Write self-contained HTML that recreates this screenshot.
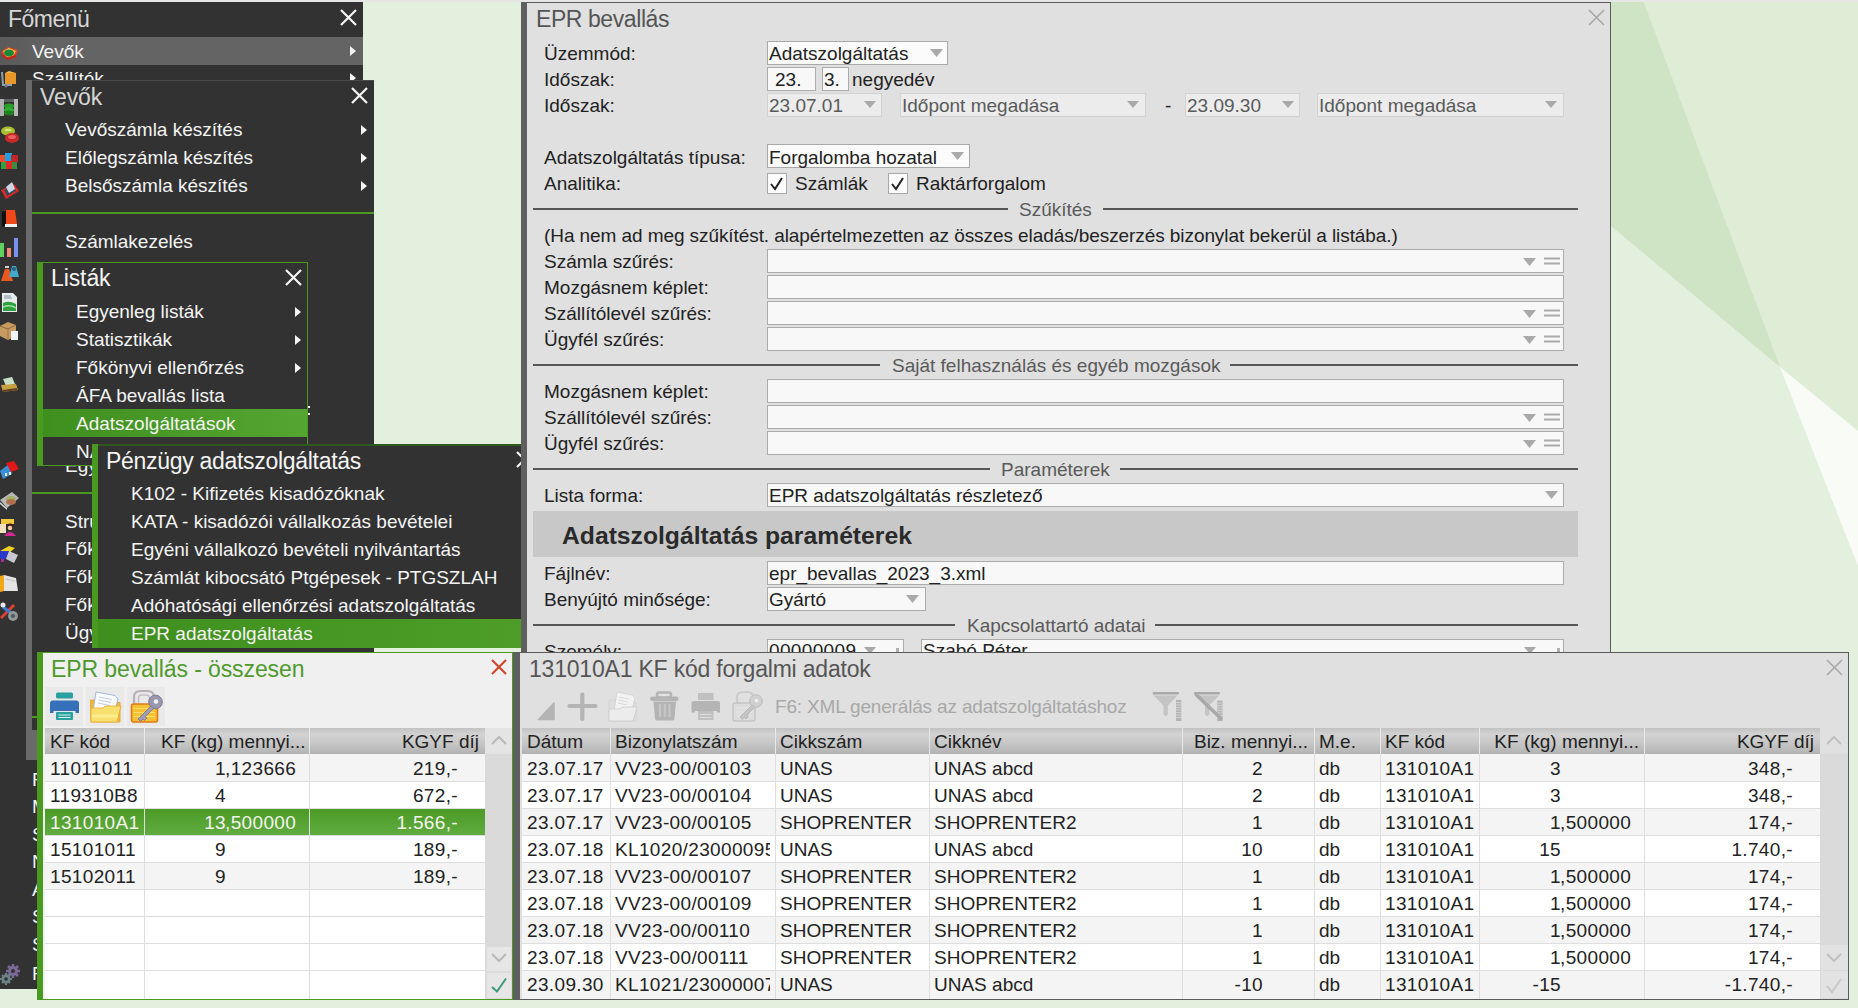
<!DOCTYPE html><html><head><meta charset="utf-8"><style>
html,body{margin:0;padding:0;width:1858px;height:1008px;overflow:hidden;position:relative;background:#e3efdc;}
.r{position:absolute;}
.t{position:absolute;font-family:"Liberation Sans",sans-serif;font-size:19px;line-height:19px;white-space:pre;color:#222;}
</style></head><body>
<svg class="r" style="left:0;top:0" width="1858" height="1008">
<rect width="1858" height="1008" fill="#e4f0de"/>
<polygon points="1643,0 1858,0 1858,431 1780,367" fill="#e0edd6"/>
<polygon points="1611,0 1643,0 1780,367 1611,226" fill="#cee4c4"/>
<polygon points="1780,367 1858,431 1858,566" fill="#f8fbf6"/>
</svg>
<div class="r" style="left:0px;top:0px;width:1858px;height:2px;background:#e6e6e6"></div>
<div class="r" style="left:0px;top:2px;width:363px;height:987px;background:#323232"></div>
<div class="t " style="left:8px;top:8px;font-size:23px;line-height:23px;color:#d6d6d6;letter-spacing:-0.5px;">Főmenü</div>
<svg class="r" style="left:338.5px;top:7.5px" width="19" height="19"><path d="M2 2L17 17M17 2L2 17" stroke="#f4f4f4" stroke-width="2.2"/></svg>
<div class="r" style="left:0px;top:37px;width:363px;height:28px;background:linear-gradient(90deg,#5a5a5a,#646464 15%,#646464)"></div>
<div class="t " style="left:32px;top:42px;color:#f4f4f4;">Vevők</div>
<svg class="r" style="left:350px;top:46px" width="7" height="11"><path d="M0 0L6 5L0 10Z" fill="#f4f4f4"/></svg>
<div class="t " style="left:32px;top:69px;color:#f4f4f4;">Szállítók</div>
<svg class="r" style="left:350px;top:73px" width="7" height="11"><path d="M0 0L6 5L0 10Z" fill="#f4f4f4"/></svg>
<div class="t " style="left:32px;top:770px;color:#f4f4f4;">F</div>
<div class="t " style="left:32px;top:797px;color:#f4f4f4;">M</div>
<div class="t " style="left:32px;top:825px;color:#f4f4f4;">S</div>
<div class="t " style="left:32px;top:852px;color:#f4f4f4;">N</div>
<div class="t " style="left:32px;top:880px;color:#f4f4f4;">A</div>
<div class="t " style="left:32px;top:907px;color:#f4f4f4;">S</div>
<div class="t " style="left:32px;top:935px;color:#f4f4f4;">S</div>
<div class="t " style="left:32px;top:964px;color:#f4f4f4;">F</div>
<svg class="r" style="left:0px;top:43px" width="22" height="22"><path d="M1 9L8 4L18 7L15 15L6 16Z" fill="#e8402a"/><path d="M3 8L9 5L16 8L13 13L6 14Z" fill="#f4c040"/><ellipse cx="9" cy="10" rx="5" ry="3.5" fill="#1a8a3a"/><path d="M2 12L8 16L16 13" stroke="#c02020" stroke-width="2" fill="none"/></svg>
<svg class="r" style="left:0px;top:69px" width="22" height="22"><path d="M2 3L3 16H12" stroke="#8aa0b0" stroke-width="2" fill="none"/><rect x="5" y="4" width="11" height="11" fill="#e89828"/><path d="M5 4L9 2L16 4" fill="#f4b848"/><circle cx="6" cy="17" r="1.5" fill="#707880"/></svg>
<svg class="r" style="left:0px;top:98px" width="22" height="22"><rect x="0" y="1" width="4" height="17" fill="#b0b0b0"/><rect x="14" y="1" width="4" height="17" fill="#b8b8b8"/><rect x="4" y="1" width="10" height="3" fill="#606060"/><ellipse cx="9" cy="8" rx="5" ry="2.5" fill="#28a028"/><ellipse cx="9" cy="12" rx="5" ry="2.5" fill="#30b030"/><ellipse cx="9" cy="15" rx="5" ry="2.5" fill="#208020"/></svg>
<svg class="r" style="left:0px;top:125px" width="22" height="22"><ellipse cx="8" cy="6" rx="7" ry="4.5" fill="#a8c030"/><path d="M5 5H11" stroke="#e8f0a0" stroke-width="1.5"/><ellipse cx="12" cy="13" rx="7" ry="5" fill="#c82828"/><ellipse cx="12" cy="12" rx="4" ry="2" fill="#e86060"/></svg>
<svg class="r" style="left:0px;top:152px" width="22" height="22"><rect x="0" y="3" width="6" height="7" fill="#e85030"/><rect x="5" y="1" width="7" height="8" fill="#20a0e0"/><rect x="11" y="3" width="7" height="7" fill="#c02828"/><rect x="1" y="10" width="6" height="7" fill="#30a040"/><rect x="6" y="9" width="7" height="8" fill="#e02828"/><rect x="12" y="10" width="5" height="7" fill="#3a8a40"/></svg>
<svg class="r" style="left:0px;top:181px" width="22" height="22"><path d="M1 9L14 3L19 10L6 18Z" fill="#e02828"/><path d="M4 9L13 5L16 10L7 15Z" fill="#3a4a5a"/><path d="M6 6L12 1L15 8L9 12Z" fill="#c8d8e8"/></svg>
<svg class="r" style="left:0px;top:209px" width="22" height="22"><path d="M4 1H15L17 15H6Z" fill="#f04818"/><path d="M2 3L6 1V16L2 18Z" fill="#101010"/><path d="M5 15H17V18H5Z" fill="#f0f0f0"/></svg>
<svg class="r" style="left:0px;top:238px" width="22" height="22"><rect x="0" y="5" width="4" height="14" fill="#60d060"/><rect x="7" y="10" width="4" height="9" fill="#f08878"/><rect x="14" y="0" width="4" height="19" fill="#7890f0"/></svg>
<svg class="r" style="left:0px;top:265px" width="22" height="22"><path d="M5 4H9L13 16H1Z" fill="#e85a20"/><path d="M5 2H9" stroke="#d0d0d0" stroke-width="2"/><path d="M12 1H16L19 12H9Z" fill="#40a8c8"/><circle cx="14" cy="4" r="2" fill="#2a5a80"/></svg>
<svg class="r" style="left:0px;top:292px" width="22" height="22"><path d="M2 1H13L17 5V20H2Z" fill="#e8ecec"/><path d="M3 11Q9 8 16 12V19H3Z" fill="#30a040"/><path d="M3 15Q10 12 16 16" stroke="#a0e0a0" stroke-width="1.5" fill="none"/><path d="M4 4H11M4 6H12" stroke="#8090a0" stroke-width="1"/></svg>
<svg class="r" style="left:0px;top:321px" width="22" height="22"><path d="M0 5L8 1L16 4V15L8 19L0 15Z" fill="#c89a60"/><path d="M0 5L8 8L16 4" stroke="#8a6a40" stroke-width="1" fill="none"/><path d="M8 8V19" stroke="#a07a48" stroke-width="1"/><rect x="11" y="10" width="7" height="9" fill="#f0f4ff"/></svg>
<svg class="r" style="left:0px;top:375px" width="22" height="22"><path d="M3 4L12 2L15 9L6 11Z" fill="#c8e0c8"/><path d="M1 10L16 9L18 15L3 17Z" fill="#c8a040"/><path d="M3 16L17 14" stroke="#604020" stroke-width="2"/></svg>
<svg class="r" style="left:0px;top:461px" width="22" height="22"><path d="M0 10L9 3L12 13L3 18Z" fill="#3a90d8"/><path d="M6 2L14 0L19 8L11 11Z" fill="#e01818"/><rect x="5" y="12" width="2" height="3" fill="#f0f0f0"/><rect x="9" y="11" width="2" height="3" fill="#f0f0f0"/></svg>
<svg class="r" style="left:0px;top:490px" width="22" height="22"><path d="M0 10L12 2L19 8L7 18Z" fill="#b8b8b8"/><path d="M0 12L7 18V20L0 14Z" fill="#d8d8d8"/><ellipse cx="11" cy="9" rx="5" ry="3" fill="#a0b060"/><ellipse cx="11" cy="12" rx="5" ry="3" fill="#b07050"/></svg>
<svg class="r" style="left:0px;top:516px" width="22" height="22"><rect x="1" y="3" width="13" height="5" fill="#f0c840"/><rect x="0" y="8" width="6" height="9" fill="#f0e0c0"/><circle cx="10" cy="11" r="3.5" fill="#402020"/><path d="M4 20Q10 12 16 20Z" fill="#d02890"/><circle cx="10" cy="12" r="2.3" fill="#f0c8a8"/></svg>
<svg class="r" style="left:0px;top:545px" width="22" height="22"><path d="M0 6L9 1L15 3L8 9Z" fill="#f0d020"/><rect x="0" y="6" width="9" height="8" fill="#2838c8"/><path d="M9 6L18 10L14 18L6 14Z" fill="#c8c8d0"/><rect x="1" y="14" width="3" height="3" fill="#a03090"/></svg>
<svg class="r" style="left:0px;top:574px" width="22" height="22"><path d="M0 2L4 1V17L0 18Z" fill="#f0a818"/><path d="M4 1L16 4L18 17L4 17Z" fill="#e4e4e4"/><path d="M6 5L15 7" stroke="#c0c0c0" stroke-width="1"/></svg>
<svg class="r" style="left:0px;top:601px" width="22" height="22"><path d="M1 17L14 4" stroke="#e04030" stroke-width="3"/><path d="M3 6L16 16" stroke="#3a7ad8" stroke-width="3"/><circle cx="13" cy="15" r="5" fill="#909898"/><circle cx="13" cy="15" r="2" fill="#505858"/><circle cx="3" cy="4" r="2.5" fill="#e8e8f0"/></svg>
<svg class="r" style="left:0;top:960px" width="24" height="28"><g fill="#7a6a98"><circle cx="13" cy="11" r="5"/><path d="M13 4V18M6 11H20M8 6L18 16M18 6L8 16" stroke="#7a6a98" stroke-width="2.5"/></g><circle cx="13" cy="11" r="2" fill="#323232"/><g fill="#6a8486"><circle cx="6" cy="19" r="4.5"/><path d="M6 13V25M0 19H12M2 15L10 23M10 15L2 23" stroke="#6a8486" stroke-width="2.2"/></g><circle cx="6" cy="19" r="1.8" fill="#323232"/></svg>
<div class="r" style="left:26px;top:80px;width:348px;height:680px;background:#323232;border-top:1px solid #4a4a4a;box-sizing:border-box"></div>
<div class="r" style="left:26px;top:80px;width:6px;height:680px;background:#6a6a6a"></div>
<div class="r" style="left:32px;top:730px;width:5px;height:30px;background:#6a6a6a"></div>
<div class="t " style="left:40px;top:86px;font-size:23px;line-height:23px;letter-spacing:-0.1px;color:#d6d6d6;">Vevők</div>
<svg class="r" style="left:349.5px;top:85.5px" width="19" height="19"><path d="M2 2L17 17M17 2L2 17" stroke="#f4f4f4" stroke-width="2.2"/></svg>
<div class="t " style="left:65px;top:120px;color:#f4f4f4;">Vevőszámla készítés</div>
<svg class="r" style="left:361px;top:125px" width="7" height="11"><path d="M0 0L6 5L0 10Z" fill="#f4f4f4"/></svg>
<div class="t " style="left:65px;top:148px;color:#f4f4f4;">Előlegszámla készítés</div>
<svg class="r" style="left:361px;top:153px" width="7" height="11"><path d="M0 0L6 5L0 10Z" fill="#f4f4f4"/></svg>
<div class="t " style="left:65px;top:176px;color:#f4f4f4;">Belsőszámla készítés</div>
<svg class="r" style="left:361px;top:181px" width="7" height="11"><path d="M0 0L6 5L0 10Z" fill="#f4f4f4"/></svg>
<div class="r" style="left:32px;top:212px;width:342px;height:2px;background:#4a9a22"></div>
<div class="t " style="left:65px;top:232px;color:#f4f4f4;">Számlakezelés</div>
<div class="t " style="left:65px;top:456px;color:#f4f4f4;">Egyenleg listák</div>
<div class="r" style="left:32px;top:492px;width:342px;height:2px;background:#4a9a22"></div>
<div class="t " style="left:65px;top:512px;color:#f4f4f4;">Struktúra</div>
<div class="t " style="left:65px;top:539px;color:#f4f4f4;">Főkönyvi</div>
<div class="t " style="left:65px;top:567px;color:#f4f4f4;">Főkönyvi</div>
<div class="t " style="left:65px;top:595px;color:#f4f4f4;">Főkönyvi</div>
<div class="t " style="left:65px;top:623px;color:#f4f4f4;">Ügyfél</div>
<div class="r" style="left:32px;top:716px;width:342px;height:2px;background:#4a9a22"></div>
<div class="r" style="left:37px;top:262px;width:271px;height:204px;background:#323232;border:1px solid #4a9a22;box-sizing:border-box"></div>
<div class="r" style="left:37px;top:262px;width:6px;height:204px;background:#4a9a22"></div>
<div class="t " style="left:51px;top:267px;font-size:23px;line-height:23px;letter-spacing:-0.1px;color:#f4f4f4;">Listák</div>
<svg class="r" style="left:283.5px;top:267.5px" width="19" height="19"><path d="M2 2L17 17M17 2L2 17" stroke="#f4f4f4" stroke-width="2.2"/></svg>
<div class="t " style="left:76px;top:302px;color:#f4f4f4;">Egyenleg listák</div>
<svg class="r" style="left:295px;top:307px" width="7" height="11"><path d="M0 0L6 5L0 10Z" fill="#f4f4f4"/></svg>
<div class="t " style="left:76px;top:330px;color:#f4f4f4;">Statisztikák</div>
<svg class="r" style="left:295px;top:335px" width="7" height="11"><path d="M0 0L6 5L0 10Z" fill="#f4f4f4"/></svg>
<div class="t " style="left:76px;top:358px;color:#f4f4f4;">Főkönyvi ellenőrzés</div>
<svg class="r" style="left:295px;top:363px" width="7" height="11"><path d="M0 0L6 5L0 10Z" fill="#f4f4f4"/></svg>
<div class="t " style="left:76px;top:386px;color:#f4f4f4;">ÁFA bevallás lista</div>
<div class="r" style="left:43px;top:409px;width:264px;height:28px;background:linear-gradient(90deg,#3f8f1f,#55a532)"></div>
<div class="t " style="left:76px;top:414px;color:#f4f4f0;">Adatszolgáltatások</div>
<div class="t " style="left:76px;top:442px;color:#f4f4f4;">NAV</div>
<div class="r" style="left:308px;top:406px;width:2px;height:2px;background:#f4f4f4"></div>
<div class="r" style="left:308px;top:413px;width:2px;height:2px;background:#f4f4f4"></div>
<div class="r" style="left:92px;top:444px;width:429px;height:204px;background:#323232;border-top:2px solid #2f5a1c;box-sizing:border-box"></div>
<div class="r" style="left:92px;top:444px;width:6px;height:204px;background:#4a9a22"></div>
<div class="t " style="left:106px;top:450px;font-size:23px;line-height:23px;color:#f4f4f4;letter-spacing:-0.3px;">Pénzügy adatszolgáltatás</div>
<svg class="r" style="left:514.5px;top:449.5px" width="19" height="19"><path d="M2 2L17 17M17 2L2 17" stroke="#f4f4f4" stroke-width="2.2"/></svg>
<div class="t " style="left:131px;top:484px;color:#f4f4f4;">K102 - Kifizetés kisadózóknak</div>
<div class="t " style="left:131px;top:512px;color:#f4f4f4;">KATA - kisadózói vállalkozás bevételei</div>
<div class="t " style="left:131px;top:540px;color:#f4f4f4;">Egyéni vállalkozó bevételi nyilvántartás</div>
<div class="t " style="left:131px;top:568px;color:#f4f4f4;">Számlát kibocsátó Ptgépesek - PTGSZLAH</div>
<div class="t " style="left:131px;top:596px;color:#f4f4f4;">Adóhatósági ellenőrzési adatszolgáltatás</div>
<div class="r" style="left:98px;top:619px;width:423px;height:29px;background:linear-gradient(90deg,#3f8f1f,#4d9d28)"></div>
<div class="t " style="left:131px;top:624px;color:#f4f4f0;">EPR adatszolgáltatás</div>
<div class="r" style="left:521px;top:2px;width:1090px;height:650px;background:#e0e0e0;border-top:1px solid #5a5a5a;border-right:1px solid #5a5a5a;box-sizing:border-box;overflow:hidden">
</div>
<div class="r" style="left:521px;top:2px;width:6px;height:650px;background:#5f5f5f"></div>
<div class="t " style="left:536px;top:8px;font-size:23px;line-height:23px;color:#555555;letter-spacing:-0.42px;">EPR bevallás</div>
<svg class="r" style="left:1586.5px;top:7.5px" width="19" height="19"><path d="M2 2L17 17M17 2L2 17" stroke="#a8a8a8" stroke-width="1.6"/></svg>
<div class="t " style="left:544px;top:44px;">Üzemmód:</div>
<div class="r" style="left:767px;top:41px;width:181px;height:24px;background:#fbfbfb;border:1px solid #a9a9a9;box-sizing:border-box"></div>
<div class="t " style="left:769px;top:44px;">Adatszolgáltatás</div>
<svg class="r" style="left:930px;top:49px" width="13" height="8"><path d="M0 0L13 0L6.5 8Z" fill="#a9a9a9"/></svg>
<div class="t " style="left:544px;top:70px;">Időszak:</div>
<div class="r" style="left:767px;top:67px;width:49px;height:24px;background:#f8f8f8;border:1px solid #acacac;box-sizing:border-box"></div>
<div class="t " style="left:775px;top:70px;">23.</div>
<div class="r" style="left:822px;top:67px;width:27px;height:24px;background:#f8f8f8;border:1px solid #acacac;box-sizing:border-box"></div>
<div class="t " style="left:824px;top:70px;">3.</div>
<div class="t " style="left:852px;top:70px;">negyedév</div>
<div class="t " style="left:544px;top:96px;">Időszak:</div>
<div class="r" style="left:767px;top:93px;width:115px;height:24px;background:#ececec;border:1px solid #d2d2d2;box-sizing:border-box"></div>
<div class="t " style="left:769px;top:96px;color:#5a5a5a;">23.07.01</div>
<svg class="r" style="left:864px;top:101px" width="12" height="7"><path d="M0 0L12 0L6.0 7Z" fill="#a9a9a9"/></svg>
<div class="r" style="left:900px;top:93px;width:246px;height:24px;background:#ececec;border:1px solid #d2d2d2;box-sizing:border-box"></div>
<div class="t " style="left:902px;top:96px;color:#5a5a5a;">Időpont megadása</div>
<svg class="r" style="left:1127px;top:101px" width="12" height="7"><path d="M0 0L12 0L6.0 7Z" fill="#a9a9a9"/></svg>
<div class="t " style="left:1165px;top:96px;">-</div>
<div class="r" style="left:1185px;top:93px;width:115px;height:24px;background:#ececec;border:1px solid #d2d2d2;box-sizing:border-box"></div>
<div class="t " style="left:1187px;top:96px;color:#5a5a5a;">23.09.30</div>
<svg class="r" style="left:1282px;top:101px" width="12" height="7"><path d="M0 0L12 0L6.0 7Z" fill="#a9a9a9"/></svg>
<div class="r" style="left:1317px;top:93px;width:247px;height:24px;background:#ececec;border:1px solid #d2d2d2;box-sizing:border-box"></div>
<div class="t " style="left:1319px;top:96px;color:#5a5a5a;">Időpont megadása</div>
<svg class="r" style="left:1545px;top:101px" width="12" height="7"><path d="M0 0L12 0L6.0 7Z" fill="#a9a9a9"/></svg>
<div class="t " style="left:544px;top:148px;">Adatszolgáltatás típusa:</div>
<div class="r" style="left:767px;top:144px;width:203px;height:24px;background:#fbfbfb;border:1px solid #a9a9a9;box-sizing:border-box"></div>
<div class="t " style="left:769px;top:148px;">Forgalomba hozatal</div>
<svg class="r" style="left:951px;top:152px" width="13" height="8"><path d="M0 0L13 0L6.5 8Z" fill="#a9a9a9"/></svg>
<div class="t " style="left:544px;top:174px;">Analitika:</div>
<div class="r" style="left:767px;top:173px;width:20px;height:21px;background:#fbfbfb;border:1px solid #a9a9a9;box-sizing:border-box"></div>
<svg class="r" style="left:767px;top:173px" width="20" height="21"><path d="M4 11L8 16L15 5" stroke="#222" stroke-width="2" fill="none"/></svg>
<div class="t " style="left:795px;top:174px;">Számlák</div>
<div class="r" style="left:888px;top:173px;width:20px;height:21px;background:#fbfbfb;border:1px solid #a9a9a9;box-sizing:border-box"></div>
<svg class="r" style="left:888px;top:173px" width="20" height="21"><path d="M4 11L8 16L15 5" stroke="#222" stroke-width="2" fill="none"/></svg>
<div class="t " style="left:916px;top:174px;">Raktárforgalom</div>
<div class="r" style="left:533px;top:208px;width:475px;height:2px;background:#575757"></div>
<div class="r" style="left:1103px;top:208px;width:475px;height:2px;background:#575757"></div>
<div class="t " style="left:1019px;top:200px;color:#5a5a5a;">Szűkítés</div>
<div class="t " style="left:544px;top:226px;letter-spacing:-0.08px;">(Ha nem ad meg szűkítést. alapértelmezetten az összes eladás/beszerzés bizonylat bekerül a listába.)</div>
<div class="t " style="left:544px;top:252px;">Számla szűrés:</div>
<div class="r" style="left:767px;top:249px;width:797px;height:24px;background:#f8f8f8;border:1px solid #acacac;box-sizing:border-box"></div>
<svg class="r" style="left:1523px;top:258px" width="13" height="8"><path d="M0 0L13 0L6.5 8Z" fill="#a9a9a9"/></svg>
<svg class="r" style="left:1544px;top:255px" width="16" height="12"><path d="M0 3.5H16M0 8.5H16" stroke="#a9a9a9" stroke-width="2"/></svg>
<div class="t " style="left:544px;top:278px;">Mozgásnem képlet:</div>
<div class="r" style="left:767px;top:275px;width:797px;height:24px;background:#f8f8f8;border:1px solid #acacac;box-sizing:border-box"></div>
<div class="t " style="left:544px;top:304px;">Szállítólevél szűrés:</div>
<div class="r" style="left:767px;top:301px;width:797px;height:24px;background:#f8f8f8;border:1px solid #acacac;box-sizing:border-box"></div>
<svg class="r" style="left:1523px;top:310px" width="13" height="8"><path d="M0 0L13 0L6.5 8Z" fill="#a9a9a9"/></svg>
<svg class="r" style="left:1544px;top:307px" width="16" height="12"><path d="M0 3.5H16M0 8.5H16" stroke="#a9a9a9" stroke-width="2"/></svg>
<div class="t " style="left:544px;top:330px;">Ügyfél szűrés:</div>
<div class="r" style="left:767px;top:327px;width:797px;height:24px;background:#f8f8f8;border:1px solid #acacac;box-sizing:border-box"></div>
<svg class="r" style="left:1523px;top:336px" width="13" height="8"><path d="M0 0L13 0L6.5 8Z" fill="#a9a9a9"/></svg>
<svg class="r" style="left:1544px;top:333px" width="16" height="12"><path d="M0 3.5H16M0 8.5H16" stroke="#a9a9a9" stroke-width="2"/></svg>
<div class="r" style="left:533px;top:364px;width:347px;height:2px;background:#575757"></div>
<div class="r" style="left:1230px;top:364px;width:348px;height:2px;background:#575757"></div>
<div class="t " style="left:892px;top:356px;color:#5a5a5a;">Saját felhasználás és egyéb mozgások</div>
<div class="t " style="left:544px;top:382px;">Mozgásnem képlet:</div>
<div class="r" style="left:767px;top:379px;width:797px;height:24px;background:#f8f8f8;border:1px solid #acacac;box-sizing:border-box"></div>
<div class="t " style="left:544px;top:408px;">Szállítólevél szűrés:</div>
<div class="r" style="left:767px;top:405px;width:797px;height:24px;background:#f8f8f8;border:1px solid #acacac;box-sizing:border-box"></div>
<svg class="r" style="left:1523px;top:414px" width="13" height="8"><path d="M0 0L13 0L6.5 8Z" fill="#a9a9a9"/></svg>
<svg class="r" style="left:1544px;top:411px" width="16" height="12"><path d="M0 3.5H16M0 8.5H16" stroke="#a9a9a9" stroke-width="2"/></svg>
<div class="t " style="left:544px;top:434px;">Ügyfél szűrés:</div>
<div class="r" style="left:767px;top:431px;width:797px;height:24px;background:#f8f8f8;border:1px solid #acacac;box-sizing:border-box"></div>
<svg class="r" style="left:1523px;top:440px" width="13" height="8"><path d="M0 0L13 0L6.5 8Z" fill="#a9a9a9"/></svg>
<svg class="r" style="left:1544px;top:437px" width="16" height="12"><path d="M0 3.5H16M0 8.5H16" stroke="#a9a9a9" stroke-width="2"/></svg>
<div class="r" style="left:533px;top:468px;width:457px;height:2px;background:#575757"></div>
<div class="r" style="left:1120px;top:468px;width:458px;height:2px;background:#575757"></div>
<div class="t " style="left:1001px;top:460px;color:#5a5a5a;">Paraméterek</div>
<div class="t " style="left:544px;top:486px;">Lista forma:</div>
<div class="r" style="left:767px;top:483px;width:797px;height:24px;background:#f8f8f8;border:1px solid #acacac;box-sizing:border-box"></div>
<div class="t " style="left:769px;top:486px;">EPR adatszolgáltatás részletező</div>
<svg class="r" style="left:1545px;top:491px" width="13" height="8"><path d="M0 0L13 0L6.5 8Z" fill="#a9a9a9"/></svg>
<div class="r" style="left:533px;top:511px;width:1045px;height:46px;background:#c8c8c8"></div>
<div class="t " style="left:562px;top:524px;font-size:24.7px;line-height:24.7px;color:#2a2a2a;font-weight:700;">Adatszolgáltatás paraméterek</div>
<div class="t " style="left:544px;top:564px;">Fájlnév:</div>
<div class="r" style="left:767px;top:561px;width:797px;height:24px;background:#f8f8f8;border:1px solid #acacac;box-sizing:border-box"></div>
<div class="t " style="left:769px;top:564px;">epr_bevallas_2023_3.xml</div>
<div class="t " style="left:544px;top:590px;">Benyújtó minősége:</div>
<div class="r" style="left:767px;top:587px;width:159px;height:24px;background:#f8f8f8;border:1px solid #acacac;box-sizing:border-box"></div>
<div class="t " style="left:769px;top:590px;">Gyártó</div>
<svg class="r" style="left:906px;top:595px" width="13" height="8"><path d="M0 0L13 0L6.5 8Z" fill="#a9a9a9"/></svg>
<div class="r" style="left:533px;top:624px;width:422px;height:2px;background:#575757"></div>
<div class="r" style="left:1155px;top:624px;width:423px;height:2px;background:#575757"></div>
<div class="t " style="left:967px;top:616px;color:#5a5a5a;">Kapcsolattartó adatai</div>
<div class="t " style="left:544px;top:642px;">Személy:</div>
<div class="r" style="left:767px;top:639px;width:137px;height:24px;background:#f8f8f8;border:1px solid #acacac;box-sizing:border-box"></div>
<div class="t " style="left:769px;top:641px;letter-spacing:0.35px;">00000009</div>
<svg class="r" style="left:864px;top:647px" width="12" height="7"><path d="M0 0L12 0L6.0 7Z" fill="#a9a9a9"/></svg>
<div class="r" style="left:896px;top:648px;width:3px;height:4px;background:#b0b0b0"></div>
<div class="r" style="left:921px;top:639px;width:643px;height:24px;background:#f8f8f8;border:1px solid #acacac;box-sizing:border-box"></div>
<div class="t " style="left:923px;top:641px;">Szabó Péter</div>
<svg class="r" style="left:1524px;top:647px" width="12" height="7"><path d="M0 0L12 0L6.0 7Z" fill="#a9a9a9"/></svg>
<div class="r" style="left:1557px;top:648px;width:3px;height:4px;background:#b0b0b0"></div>
<div class="r" style="left:37px;top:652px;width:476px;height:348px;background:#f0f0f0;border:1px solid #4a9a22;box-sizing:border-box"></div>
<div class="r" style="left:37px;top:652px;width:6px;height:348px;background:#4a9a22"></div>
<div class="t " style="left:51px;top:658px;font-size:23px;line-height:23px;letter-spacing:-0.1px;color:#4e9a2c;">EPR bevallás - összesen</div>
<svg class="r" style="left:490.0px;top:658.0px" width="18" height="18"><path d="M2 2L16 16M16 2L2 16" stroke="#d0482e" stroke-width="2.2"/></svg>
<div class="r" style="left:45px;top:687px;width:38px;height:39px;background:#e9e9e9"></div>
<div class="r" style="left:86px;top:687px;width:38px;height:39px;background:#e9e9e9"></div>
<div class="r" style="left:127px;top:687px;width:38px;height:39px;background:#e9e9e9"></div>
<svg class="r" style="left:44px;top:686px" width="122" height="42">
<rect x="12" y="6.5" width="17" height="6" rx="1.5" fill="#2aa0a0"/>
<path d="M9 14.5H32Q35 14.5 35 17.5V27H31.5V25H9.5V27H6V17.5Q6 14.5 9 14.5Z" fill="#3570b8"/>
<rect x="12" y="26" width="17" height="8" rx="1" fill="#2aa0a0"/>
<path d="M14.5 29H26.5M14.5 31.5H26.5" stroke="#d8f4f4" stroke-width="1.2"/>
<path d="M46.5 14H55L57 16.5H76V36H47Z" fill="#f2b838" stroke="#e0a020" stroke-width="0.8"/>
<path d="M52 6L71 9.5L74 13L70 29L49 25Z" fill="#fafcff" stroke="#8aa8d0" stroke-width="0.8"/>
<path d="M55 11L68 13.5M54.5 14L67 16.5M54 17L66 19.5" stroke="#b0c4e0" stroke-width="0.8"/>
<path d="M47 22H59L61 20H77L73 36H47Z" fill="#f8e070" stroke="#e8a828" stroke-width="0.8"/>
<path d="M48 30H74" stroke="#fff4a0" stroke-width="3" opacity=".6"/>
<path d="M90 20V11Q90 5 97 5H103Q110 5 110 11V14" stroke="#b8b0b8" stroke-width="2.2" fill="none"/>
<path d="M94.5 19V12Q94.5 9 97.5 9H102.5Q105.5 9 105.5 12V14" stroke="#c8c0c8" stroke-width="1.5" fill="none"/>
<rect x="87.5" y="18" width="26" height="18" rx="2" fill="#f6c030" stroke="#e07a18" stroke-width="1.6"/>
<path d="M89 22.5H111M89 26.5H111M89 30.5H111" stroke="#fbe070" stroke-width="1.2"/>
<circle cx="111.5" cy="16" r="6.8" fill="#9a98b0" stroke="#7a7890" stroke-width="1"/>
<circle cx="112" cy="15.5" r="2.3" fill="#f0f0f8"/>
<path d="M107 20L94 33L96.5 35.5L99 33L100.5 34.5L103 32L101.5 30.5L110 22Z" fill="#a09cb8" stroke="#7a7890" stroke-width="0.8"/>
</svg>
<div class="r" style="left:45px;top:728px;width:440px;height:26px;background:linear-gradient(#c2c2c2,#d2d2d2 25%,#c6c6c6 60%,#b2b2b2)"></div>
<div class="r" style="left:144px;top:728px;width:1px;height:26px;background:#e8e8e8"></div>
<div class="r" style="left:309px;top:728px;width:1px;height:26px;background:#e8e8e8"></div>
<div class="t " style="left:50px;top:732px;">KF kód</div>
<div class="t " style="left:161px;top:732px;">KF (kg) mennyi...</div>
<div class="t" style="right:1379px;top:732px;">KGYF díj</div>
<div class="r" style="left:45px;top:754px;width:440px;height:27px;background:#f4f4f4"></div>
<div class="r" style="left:144px;top:754px;width:1px;height:27px;background:#dedede"></div>
<div class="r" style="left:309px;top:754px;width:1px;height:27px;background:#dedede"></div>
<div class="t " style="left:50px;top:759px;color:#222;letter-spacing:0.35px;">11011011</div>
<div class="t" style="right:1632px;top:759px;color:#222;letter-spacing:0.35px;">1</div>
<div class="t " style="left:225px;top:759px;color:#222;letter-spacing:0.35px;">,123666</div>
<div class="t" style="right:1400px;top:759px;color:#222;letter-spacing:0.35px;">219,-</div>
<div class="r" style="left:45px;top:781px;width:440px;height:27px;background:#ffffff"></div>
<div class="r" style="left:45px;top:781px;width:440px;height:1px;background:#dedede"></div>
<div class="r" style="left:144px;top:781px;width:1px;height:27px;background:#dedede"></div>
<div class="r" style="left:309px;top:781px;width:1px;height:27px;background:#dedede"></div>
<div class="t " style="left:50px;top:786px;color:#222;letter-spacing:0.35px;">119310B8</div>
<div class="t" style="right:1632px;top:786px;color:#222;letter-spacing:0.35px;">4</div>
<div class="t" style="right:1400px;top:786px;color:#222;letter-spacing:0.35px;">672,-</div>
<div class="r" style="left:45px;top:808px;width:440px;height:27px;background:linear-gradient(#4a9a25,#60ac40)"></div>
<div class="r" style="left:45px;top:808px;width:440px;height:1px;background:#dedede"></div>
<div class="r" style="left:144px;top:808px;width:1px;height:27px;background:#dedede"></div>
<div class="r" style="left:309px;top:808px;width:1px;height:27px;background:#dedede"></div>
<div class="t " style="left:50px;top:813px;color:#f4f4ec;letter-spacing:0.35px;">131010A1</div>
<div class="t" style="right:1632px;top:813px;color:#f4f4ec;letter-spacing:0.35px;">13</div>
<div class="t " style="left:225px;top:813px;color:#f4f4ec;letter-spacing:0.35px;">,500000</div>
<div class="t" style="right:1400px;top:813px;color:#f4f4ec;letter-spacing:0.35px;">1.566,-</div>
<div class="r" style="left:45px;top:835px;width:440px;height:27px;background:#ffffff"></div>
<div class="r" style="left:45px;top:835px;width:440px;height:1px;background:#dedede"></div>
<div class="r" style="left:144px;top:835px;width:1px;height:27px;background:#dedede"></div>
<div class="r" style="left:309px;top:835px;width:1px;height:27px;background:#dedede"></div>
<div class="t " style="left:50px;top:840px;color:#222;letter-spacing:0.35px;">15101011</div>
<div class="t" style="right:1632px;top:840px;color:#222;letter-spacing:0.35px;">9</div>
<div class="t" style="right:1400px;top:840px;color:#222;letter-spacing:0.35px;">189,-</div>
<div class="r" style="left:45px;top:862px;width:440px;height:27px;background:#f4f4f4"></div>
<div class="r" style="left:45px;top:862px;width:440px;height:1px;background:#dedede"></div>
<div class="r" style="left:144px;top:862px;width:1px;height:27px;background:#dedede"></div>
<div class="r" style="left:309px;top:862px;width:1px;height:27px;background:#dedede"></div>
<div class="t " style="left:50px;top:867px;color:#222;letter-spacing:0.35px;">15102011</div>
<div class="t" style="right:1632px;top:867px;color:#222;letter-spacing:0.35px;">9</div>
<div class="t" style="right:1400px;top:867px;color:#222;letter-spacing:0.35px;">189,-</div>
<div class="r" style="left:45px;top:889px;width:440px;height:27px;background:#ffffff"></div>
<div class="r" style="left:45px;top:889px;width:440px;height:1px;background:#dedede"></div>
<div class="r" style="left:144px;top:889px;width:1px;height:27px;background:#dedede"></div>
<div class="r" style="left:309px;top:889px;width:1px;height:27px;background:#dedede"></div>
<div class="r" style="left:45px;top:916px;width:440px;height:27px;background:#ffffff"></div>
<div class="r" style="left:45px;top:916px;width:440px;height:1px;background:#dedede"></div>
<div class="r" style="left:144px;top:916px;width:1px;height:27px;background:#dedede"></div>
<div class="r" style="left:309px;top:916px;width:1px;height:27px;background:#dedede"></div>
<div class="r" style="left:45px;top:943px;width:440px;height:27px;background:#ffffff"></div>
<div class="r" style="left:45px;top:943px;width:440px;height:1px;background:#dedede"></div>
<div class="r" style="left:144px;top:943px;width:1px;height:27px;background:#dedede"></div>
<div class="r" style="left:309px;top:943px;width:1px;height:27px;background:#dedede"></div>
<div class="r" style="left:45px;top:970px;width:440px;height:29px;background:#ffffff"></div>
<div class="r" style="left:45px;top:970px;width:440px;height:1px;background:#dedede"></div>
<div class="r" style="left:144px;top:970px;width:1px;height:29px;background:#dedede"></div>
<div class="r" style="left:309px;top:970px;width:1px;height:29px;background:#dedede"></div>
<div class="r" style="left:485px;top:728px;width:27px;height:271px;background:#dadada"></div>
<div class="r" style="left:485px;top:728px;width:27px;height:26px;background:#e4e4e4"></div>
<svg class="r" style="left:489px;top:733px" width="20" height="14"><path d="M3 11L10 4L17 11" stroke="#b8b8b8" stroke-width="2" fill="none"/></svg>
<div class="r" style="left:487px;top:947px;width:24px;height:24px;background:#e6e6e6"></div>
<svg class="r" style="left:489px;top:951px" width="20" height="14"><path d="M3 3L10 10L17 3" stroke="#b8b8b8" stroke-width="2" fill="none"/></svg>
<div class="r" style="left:487px;top:973px;width:24px;height:25px;background:#e6e6e6"></div>
<svg class="r" style="left:489px;top:975px" width="20" height="20"><path d="M3 12L8 16.5L17 3.5" stroke="#3a9a7a" stroke-width="2" fill="none"/></svg>
<div class="r" style="left:513px;top:652px;width:1336px;height:348px;background:#e0e0e0;border:1px solid #5a5a5a;box-sizing:border-box"></div>
<div class="r" style="left:513px;top:652px;width:7px;height:348px;background:#5f5f5f"></div>
<div class="t " style="left:529px;top:658px;font-size:23px;line-height:23px;color:#555555;letter-spacing:-0.2px;">131010A1 KF kód forgalmi adatok</div>
<svg class="r" style="left:1824.5px;top:657.5px" width="19" height="19"><path d="M2 2L17 17M17 2L2 17" stroke="#a8a8a8" stroke-width="1.6"/></svg>
<svg class="r" style="left:530px;top:686px" width="240" height="40">
<path d="M8.5 33.5L24 17V33.5Z" fill="#b4b4b4" stroke="#b4b4b4" stroke-width="1.6" stroke-linejoin="round"/>
<path d="M52.3 8.5V33M39.5 20H65.5" stroke="#b4b4b4" stroke-width="4.2" stroke-linecap="round"/>
<path d="M79 14H88L90 16.5H106V35H79Z" fill="#dedede" stroke="#d0d0d0" stroke-width="0.8"/>
<path d="M87 6L102 9L105 12L101 27L84 24Z" fill="#f2f2f2" stroke="#cfcfcf" stroke-width="0.8"/>
<path d="M89 11L99 13M88.5 14L98 16M88 17L97 19" stroke="#d4d4d4" stroke-width="0.8"/>
<path d="M79 23H90L92 21H107L103 35H79Z" fill="#ececec" stroke="#cccccc" stroke-width="0.8"/>
<rect x="127" y="6.5" width="14" height="5" rx="2" fill="none" stroke="#b4b4b4" stroke-width="2.5"/>
<rect x="120" y="10.5" width="28.5" height="4.5" rx="2" fill="#b4b4b4"/>
<path d="M123.5 15.5H146L144.5 32.5Q144.5 34.5 142.5 34.5H127Q125 34.5 125 32.5Z" fill="#b4b4b4"/>
<path d="M130 18V31M134.8 18V31M139.5 18V31" stroke="#c6c6c6" stroke-width="2.2"/>
<rect x="168" y="7" width="15.5" height="7" fill="#c0c0c0"/>
<path d="M164 15H188Q190 15 190 17V26.5H187V25H165V26.5H161.5V17Q161.5 15 164 15Z" fill="#b4b4b4"/>
<rect x="168" y="25" width="15.5" height="9" fill="#c0c0c0"/>
<path d="M170 28.5H181.5M170 31.5H181.5" stroke="#dedede" stroke-width="1.2"/>
<path d="M207 18V11Q207 6 213 6H218Q223 6 223 11V13" stroke="#cccccc" stroke-width="2.2" fill="none"/>
<rect x="203" y="17" width="22" height="18" rx="2" fill="#dcdcdc" stroke="#c4c4c4" stroke-width="1.4"/>
<path d="M205 22H223M205 26H223M205 30H223" stroke="#e6e6e6" stroke-width="1"/>
<circle cx="226" cy="15" r="6.3" fill="#d0d0d0" stroke="#bdbdbd" stroke-width="1"/>
<circle cx="226.5" cy="14.5" r="2" fill="#ececec"/>
<path d="M222 19L210 31L212.5 33.5L214.5 31.5L216 33L218.5 30.5L217 29L224.5 21.5Z" fill="#c4c4c4" stroke="#b4b4b4" stroke-width="0.8"/>
</svg>
<div class="t " style="left:775px;top:697px;color:#a8a8a8;letter-spacing:-0.17px;">F6: XML generálás az adatszolgáltatáshoz</div>
<svg class="r" style="left:1145px;top:686px" width="90" height="40">
<rect x="7.5" y="6" width="26.5" height="2.4" rx="1" fill="#a9a9a9"/>
<path d="M8.5 9.5H32.5L22.8 19.5V28.5L20.5 30.5L18.5 28.5V19.5Z" fill="#c4c4c4"/>
<rect x="31" y="14" width="5.3" height="21" fill="#b4b4b4"/>
<path d="M31 16.5H36.3M31 19H36.3M31 21.5H36.3M31 24H36.3M31 26.5H36.3M31 29H36.3M31 31.5H36.3" stroke="#d6d6d6" stroke-width="0.9"/>
<rect x="49" y="6" width="26" height="2.4" rx="1" fill="#a9a9a9"/>
<path d="M50 9.5H74L64.3 19.5V28.5L62 30.5L60 28.5V19.5Z" fill="#c4c4c4"/>
<rect x="72.2" y="14.5" width="5.3" height="20.5" fill="#b4b4b4"/>
<path d="M72.2 17H77.5M72.2 19.5H77.5M72.2 22H77.5M72.2 24.5H77.5M72.2 27H77.5M72.2 29.5H77.5M72.2 32H77.5" stroke="#d6d6d6" stroke-width="0.9"/>
<path d="M50.5 8L77 33.5" stroke="#a9a9a9" stroke-width="3.5"/>
</svg>
<div class="r" style="left:522px;top:728px;width:1298px;height:26px;background:linear-gradient(#c2c2c2,#d2d2d2 25%,#c6c6c6 60%,#b2b2b2)"></div>
<div class="r" style="left:610px;top:728px;width:1px;height:26px;background:#e8e8e8"></div>
<div class="r" style="left:775px;top:728px;width:1px;height:26px;background:#e8e8e8"></div>
<div class="r" style="left:929px;top:728px;width:1px;height:26px;background:#e8e8e8"></div>
<div class="r" style="left:1182px;top:728px;width:1px;height:26px;background:#e8e8e8"></div>
<div class="r" style="left:1314px;top:728px;width:1px;height:26px;background:#e8e8e8"></div>
<div class="r" style="left:1380px;top:728px;width:1px;height:26px;background:#e8e8e8"></div>
<div class="r" style="left:1479px;top:728px;width:1px;height:26px;background:#e8e8e8"></div>
<div class="r" style="left:1644px;top:728px;width:1px;height:26px;background:#e8e8e8"></div>
<div class="t " style="left:527px;top:732px;">Dátum</div>
<div class="t " style="left:615px;top:732px;">Bizonylatszám</div>
<div class="t " style="left:780px;top:732px;">Cikkszám</div>
<div class="t " style="left:934px;top:732px;">Cikknév</div>
<div class="t" style="right:550px;top:732px;">Biz. mennyi...</div>
<div class="t " style="left:1319px;top:732px;">M.e.</div>
<div class="t " style="left:1385px;top:732px;">KF kód</div>
<div class="t" style="right:219px;top:732px;">KF (kg) mennyi...</div>
<div class="t" style="right:44px;top:732px;">KGYF díj</div>
<div class="r" style="left:522px;top:754px;width:1298px;height:27px;background:#f4f4f4"></div>
<div class="r" style="left:610px;top:754px;width:1px;height:27px;background:#dedede"></div>
<div class="r" style="left:775px;top:754px;width:1px;height:27px;background:#dedede"></div>
<div class="r" style="left:929px;top:754px;width:1px;height:27px;background:#dedede"></div>
<div class="r" style="left:1182px;top:754px;width:1px;height:27px;background:#dedede"></div>
<div class="r" style="left:1314px;top:754px;width:1px;height:27px;background:#dedede"></div>
<div class="r" style="left:1380px;top:754px;width:1px;height:27px;background:#dedede"></div>
<div class="r" style="left:1479px;top:754px;width:1px;height:27px;background:#dedede"></div>
<div class="r" style="left:1644px;top:754px;width:1px;height:27px;background:#dedede"></div>
<div class="t " style="left:527px;top:759px;letter-spacing:0.35px;">23.07.17</div>
<div class="r" style="left:611px;top:754px;width:159px;height:26px;overflow:hidden"><div class="t" style="left:4px;top:5px;letter-spacing:0.35px;">VV23-00/00103</div></div>
<div class="t " style="left:780px;top:759px;">UNAS</div>
<div class="t " style="left:934px;top:759px;">UNAS abcd</div>
<div class="t" style="right:595px;top:759px;letter-spacing:0.35px;">2</div>
<div class="t " style="left:1319px;top:759px;">db</div>
<div class="t " style="left:1385px;top:759px;letter-spacing:0.35px;">131010A1</div>
<div class="t" style="right:297px;top:759px;letter-spacing:0.35px;">3</div>
<div class="t" style="right:65px;top:759px;letter-spacing:0.35px;">348,-</div>
<div class="r" style="left:522px;top:781px;width:1298px;height:27px;background:#ffffff"></div>
<div class="r" style="left:522px;top:781px;width:1298px;height:1px;background:#dedede"></div>
<div class="r" style="left:610px;top:781px;width:1px;height:27px;background:#dedede"></div>
<div class="r" style="left:775px;top:781px;width:1px;height:27px;background:#dedede"></div>
<div class="r" style="left:929px;top:781px;width:1px;height:27px;background:#dedede"></div>
<div class="r" style="left:1182px;top:781px;width:1px;height:27px;background:#dedede"></div>
<div class="r" style="left:1314px;top:781px;width:1px;height:27px;background:#dedede"></div>
<div class="r" style="left:1380px;top:781px;width:1px;height:27px;background:#dedede"></div>
<div class="r" style="left:1479px;top:781px;width:1px;height:27px;background:#dedede"></div>
<div class="r" style="left:1644px;top:781px;width:1px;height:27px;background:#dedede"></div>
<div class="t " style="left:527px;top:786px;letter-spacing:0.35px;">23.07.17</div>
<div class="r" style="left:611px;top:781px;width:159px;height:26px;overflow:hidden"><div class="t" style="left:4px;top:5px;letter-spacing:0.35px;">VV23-00/00104</div></div>
<div class="t " style="left:780px;top:786px;">UNAS</div>
<div class="t " style="left:934px;top:786px;">UNAS abcd</div>
<div class="t" style="right:595px;top:786px;letter-spacing:0.35px;">2</div>
<div class="t " style="left:1319px;top:786px;">db</div>
<div class="t " style="left:1385px;top:786px;letter-spacing:0.35px;">131010A1</div>
<div class="t" style="right:297px;top:786px;letter-spacing:0.35px;">3</div>
<div class="t" style="right:65px;top:786px;letter-spacing:0.35px;">348,-</div>
<div class="r" style="left:522px;top:808px;width:1298px;height:27px;background:#f4f4f4"></div>
<div class="r" style="left:522px;top:808px;width:1298px;height:1px;background:#dedede"></div>
<div class="r" style="left:610px;top:808px;width:1px;height:27px;background:#dedede"></div>
<div class="r" style="left:775px;top:808px;width:1px;height:27px;background:#dedede"></div>
<div class="r" style="left:929px;top:808px;width:1px;height:27px;background:#dedede"></div>
<div class="r" style="left:1182px;top:808px;width:1px;height:27px;background:#dedede"></div>
<div class="r" style="left:1314px;top:808px;width:1px;height:27px;background:#dedede"></div>
<div class="r" style="left:1380px;top:808px;width:1px;height:27px;background:#dedede"></div>
<div class="r" style="left:1479px;top:808px;width:1px;height:27px;background:#dedede"></div>
<div class="r" style="left:1644px;top:808px;width:1px;height:27px;background:#dedede"></div>
<div class="t " style="left:527px;top:813px;letter-spacing:0.35px;">23.07.17</div>
<div class="r" style="left:611px;top:808px;width:159px;height:26px;overflow:hidden"><div class="t" style="left:4px;top:5px;letter-spacing:0.35px;">VV23-00/00105</div></div>
<div class="t " style="left:780px;top:813px;">SHOPRENTER</div>
<div class="t " style="left:934px;top:813px;">SHOPRENTER2</div>
<div class="t" style="right:595px;top:813px;letter-spacing:0.35px;">1</div>
<div class="t " style="left:1319px;top:813px;">db</div>
<div class="t " style="left:1385px;top:813px;letter-spacing:0.35px;">131010A1</div>
<div class="t" style="right:297px;top:813px;letter-spacing:0.35px;">1</div>
<div class="t " style="left:1560px;top:813px;letter-spacing:0.35px;">,500000</div>
<div class="t" style="right:65px;top:813px;letter-spacing:0.35px;">174,-</div>
<div class="r" style="left:522px;top:835px;width:1298px;height:27px;background:#ffffff"></div>
<div class="r" style="left:522px;top:835px;width:1298px;height:1px;background:#dedede"></div>
<div class="r" style="left:610px;top:835px;width:1px;height:27px;background:#dedede"></div>
<div class="r" style="left:775px;top:835px;width:1px;height:27px;background:#dedede"></div>
<div class="r" style="left:929px;top:835px;width:1px;height:27px;background:#dedede"></div>
<div class="r" style="left:1182px;top:835px;width:1px;height:27px;background:#dedede"></div>
<div class="r" style="left:1314px;top:835px;width:1px;height:27px;background:#dedede"></div>
<div class="r" style="left:1380px;top:835px;width:1px;height:27px;background:#dedede"></div>
<div class="r" style="left:1479px;top:835px;width:1px;height:27px;background:#dedede"></div>
<div class="r" style="left:1644px;top:835px;width:1px;height:27px;background:#dedede"></div>
<div class="t " style="left:527px;top:840px;letter-spacing:0.35px;">23.07.18</div>
<div class="r" style="left:611px;top:835px;width:159px;height:26px;overflow:hidden"><div class="t" style="left:4px;top:5px;letter-spacing:0.35px;">KL1020/23000095</div></div>
<div class="t " style="left:780px;top:840px;">UNAS</div>
<div class="t " style="left:934px;top:840px;">UNAS abcd</div>
<div class="t" style="right:595px;top:840px;letter-spacing:0.35px;">10</div>
<div class="t " style="left:1319px;top:840px;">db</div>
<div class="t " style="left:1385px;top:840px;letter-spacing:0.35px;">131010A1</div>
<div class="t" style="right:297px;top:840px;letter-spacing:0.35px;">15</div>
<div class="t" style="right:65px;top:840px;letter-spacing:0.35px;">1.740,-</div>
<div class="r" style="left:522px;top:862px;width:1298px;height:27px;background:#f4f4f4"></div>
<div class="r" style="left:522px;top:862px;width:1298px;height:1px;background:#dedede"></div>
<div class="r" style="left:610px;top:862px;width:1px;height:27px;background:#dedede"></div>
<div class="r" style="left:775px;top:862px;width:1px;height:27px;background:#dedede"></div>
<div class="r" style="left:929px;top:862px;width:1px;height:27px;background:#dedede"></div>
<div class="r" style="left:1182px;top:862px;width:1px;height:27px;background:#dedede"></div>
<div class="r" style="left:1314px;top:862px;width:1px;height:27px;background:#dedede"></div>
<div class="r" style="left:1380px;top:862px;width:1px;height:27px;background:#dedede"></div>
<div class="r" style="left:1479px;top:862px;width:1px;height:27px;background:#dedede"></div>
<div class="r" style="left:1644px;top:862px;width:1px;height:27px;background:#dedede"></div>
<div class="t " style="left:527px;top:867px;letter-spacing:0.35px;">23.07.18</div>
<div class="r" style="left:611px;top:862px;width:159px;height:26px;overflow:hidden"><div class="t" style="left:4px;top:5px;letter-spacing:0.35px;">VV23-00/00107</div></div>
<div class="t " style="left:780px;top:867px;">SHOPRENTER</div>
<div class="t " style="left:934px;top:867px;">SHOPRENTER2</div>
<div class="t" style="right:595px;top:867px;letter-spacing:0.35px;">1</div>
<div class="t " style="left:1319px;top:867px;">db</div>
<div class="t " style="left:1385px;top:867px;letter-spacing:0.35px;">131010A1</div>
<div class="t" style="right:297px;top:867px;letter-spacing:0.35px;">1</div>
<div class="t " style="left:1560px;top:867px;letter-spacing:0.35px;">,500000</div>
<div class="t" style="right:65px;top:867px;letter-spacing:0.35px;">174,-</div>
<div class="r" style="left:522px;top:889px;width:1298px;height:27px;background:#ffffff"></div>
<div class="r" style="left:522px;top:889px;width:1298px;height:1px;background:#dedede"></div>
<div class="r" style="left:610px;top:889px;width:1px;height:27px;background:#dedede"></div>
<div class="r" style="left:775px;top:889px;width:1px;height:27px;background:#dedede"></div>
<div class="r" style="left:929px;top:889px;width:1px;height:27px;background:#dedede"></div>
<div class="r" style="left:1182px;top:889px;width:1px;height:27px;background:#dedede"></div>
<div class="r" style="left:1314px;top:889px;width:1px;height:27px;background:#dedede"></div>
<div class="r" style="left:1380px;top:889px;width:1px;height:27px;background:#dedede"></div>
<div class="r" style="left:1479px;top:889px;width:1px;height:27px;background:#dedede"></div>
<div class="r" style="left:1644px;top:889px;width:1px;height:27px;background:#dedede"></div>
<div class="t " style="left:527px;top:894px;letter-spacing:0.35px;">23.07.18</div>
<div class="r" style="left:611px;top:889px;width:159px;height:26px;overflow:hidden"><div class="t" style="left:4px;top:5px;letter-spacing:0.35px;">VV23-00/00109</div></div>
<div class="t " style="left:780px;top:894px;">SHOPRENTER</div>
<div class="t " style="left:934px;top:894px;">SHOPRENTER2</div>
<div class="t" style="right:595px;top:894px;letter-spacing:0.35px;">1</div>
<div class="t " style="left:1319px;top:894px;">db</div>
<div class="t " style="left:1385px;top:894px;letter-spacing:0.35px;">131010A1</div>
<div class="t" style="right:297px;top:894px;letter-spacing:0.35px;">1</div>
<div class="t " style="left:1560px;top:894px;letter-spacing:0.35px;">,500000</div>
<div class="t" style="right:65px;top:894px;letter-spacing:0.35px;">174,-</div>
<div class="r" style="left:522px;top:916px;width:1298px;height:27px;background:#f4f4f4"></div>
<div class="r" style="left:522px;top:916px;width:1298px;height:1px;background:#dedede"></div>
<div class="r" style="left:610px;top:916px;width:1px;height:27px;background:#dedede"></div>
<div class="r" style="left:775px;top:916px;width:1px;height:27px;background:#dedede"></div>
<div class="r" style="left:929px;top:916px;width:1px;height:27px;background:#dedede"></div>
<div class="r" style="left:1182px;top:916px;width:1px;height:27px;background:#dedede"></div>
<div class="r" style="left:1314px;top:916px;width:1px;height:27px;background:#dedede"></div>
<div class="r" style="left:1380px;top:916px;width:1px;height:27px;background:#dedede"></div>
<div class="r" style="left:1479px;top:916px;width:1px;height:27px;background:#dedede"></div>
<div class="r" style="left:1644px;top:916px;width:1px;height:27px;background:#dedede"></div>
<div class="t " style="left:527px;top:921px;letter-spacing:0.35px;">23.07.18</div>
<div class="r" style="left:611px;top:916px;width:159px;height:26px;overflow:hidden"><div class="t" style="left:4px;top:5px;letter-spacing:0.35px;">VV23-00/00110</div></div>
<div class="t " style="left:780px;top:921px;">SHOPRENTER</div>
<div class="t " style="left:934px;top:921px;">SHOPRENTER2</div>
<div class="t" style="right:595px;top:921px;letter-spacing:0.35px;">1</div>
<div class="t " style="left:1319px;top:921px;">db</div>
<div class="t " style="left:1385px;top:921px;letter-spacing:0.35px;">131010A1</div>
<div class="t" style="right:297px;top:921px;letter-spacing:0.35px;">1</div>
<div class="t " style="left:1560px;top:921px;letter-spacing:0.35px;">,500000</div>
<div class="t" style="right:65px;top:921px;letter-spacing:0.35px;">174,-</div>
<div class="r" style="left:522px;top:943px;width:1298px;height:27px;background:#ffffff"></div>
<div class="r" style="left:522px;top:943px;width:1298px;height:1px;background:#dedede"></div>
<div class="r" style="left:610px;top:943px;width:1px;height:27px;background:#dedede"></div>
<div class="r" style="left:775px;top:943px;width:1px;height:27px;background:#dedede"></div>
<div class="r" style="left:929px;top:943px;width:1px;height:27px;background:#dedede"></div>
<div class="r" style="left:1182px;top:943px;width:1px;height:27px;background:#dedede"></div>
<div class="r" style="left:1314px;top:943px;width:1px;height:27px;background:#dedede"></div>
<div class="r" style="left:1380px;top:943px;width:1px;height:27px;background:#dedede"></div>
<div class="r" style="left:1479px;top:943px;width:1px;height:27px;background:#dedede"></div>
<div class="r" style="left:1644px;top:943px;width:1px;height:27px;background:#dedede"></div>
<div class="t " style="left:527px;top:948px;letter-spacing:0.35px;">23.07.18</div>
<div class="r" style="left:611px;top:943px;width:159px;height:26px;overflow:hidden"><div class="t" style="left:4px;top:5px;letter-spacing:0.35px;">VV23-00/00111</div></div>
<div class="t " style="left:780px;top:948px;">SHOPRENTER</div>
<div class="t " style="left:934px;top:948px;">SHOPRENTER2</div>
<div class="t" style="right:595px;top:948px;letter-spacing:0.35px;">1</div>
<div class="t " style="left:1319px;top:948px;">db</div>
<div class="t " style="left:1385px;top:948px;letter-spacing:0.35px;">131010A1</div>
<div class="t" style="right:297px;top:948px;letter-spacing:0.35px;">1</div>
<div class="t " style="left:1560px;top:948px;letter-spacing:0.35px;">,500000</div>
<div class="t" style="right:65px;top:948px;letter-spacing:0.35px;">174,-</div>
<div class="r" style="left:522px;top:970px;width:1298px;height:29px;background:#f4f4f4"></div>
<div class="r" style="left:522px;top:970px;width:1298px;height:1px;background:#dedede"></div>
<div class="r" style="left:610px;top:970px;width:1px;height:29px;background:#dedede"></div>
<div class="r" style="left:775px;top:970px;width:1px;height:29px;background:#dedede"></div>
<div class="r" style="left:929px;top:970px;width:1px;height:29px;background:#dedede"></div>
<div class="r" style="left:1182px;top:970px;width:1px;height:29px;background:#dedede"></div>
<div class="r" style="left:1314px;top:970px;width:1px;height:29px;background:#dedede"></div>
<div class="r" style="left:1380px;top:970px;width:1px;height:29px;background:#dedede"></div>
<div class="r" style="left:1479px;top:970px;width:1px;height:29px;background:#dedede"></div>
<div class="r" style="left:1644px;top:970px;width:1px;height:29px;background:#dedede"></div>
<div class="t " style="left:527px;top:975px;letter-spacing:0.35px;">23.09.30</div>
<div class="r" style="left:611px;top:970px;width:159px;height:26px;overflow:hidden"><div class="t" style="left:4px;top:5px;letter-spacing:0.35px;">KL1021/23000007</div></div>
<div class="t " style="left:780px;top:975px;">UNAS</div>
<div class="t " style="left:934px;top:975px;">UNAS abcd</div>
<div class="t" style="right:595px;top:975px;letter-spacing:0.35px;">-10</div>
<div class="t " style="left:1319px;top:975px;">db</div>
<div class="t " style="left:1385px;top:975px;letter-spacing:0.35px;">131010A1</div>
<div class="t" style="right:297px;top:975px;letter-spacing:0.35px;">-15</div>
<div class="t" style="right:65px;top:975px;letter-spacing:0.35px;">-1.740,-</div>
<div class="r" style="left:1820px;top:728px;width:28px;height:271px;background:#dadada"></div>
<div class="r" style="left:1820px;top:728px;width:28px;height:26px;background:#e0e0e0"></div>
<div class="r" style="left:1821px;top:945px;width:27px;height:25px;background:#e2e2e2"></div>
<div class="r" style="left:1821px;top:971px;width:27px;height:27px;background:#e2e2e2"></div>
<svg class="r" style="left:1824px;top:733px" width="20" height="14"><path d="M3 11L10 4L17 11" stroke="#c0c0c0" stroke-width="2" fill="none"/></svg>
<svg class="r" style="left:1824px;top:951px" width="20" height="14"><path d="M3 3L10 10L17 3" stroke="#c0c0c0" stroke-width="2" fill="none"/></svg>
<svg class="r" style="left:1824px;top:975px" width="20" height="20"><path d="M3 11L8 17L17 4" stroke="#c8c8c8" stroke-width="2" fill="none"/></svg>
</body></html>
